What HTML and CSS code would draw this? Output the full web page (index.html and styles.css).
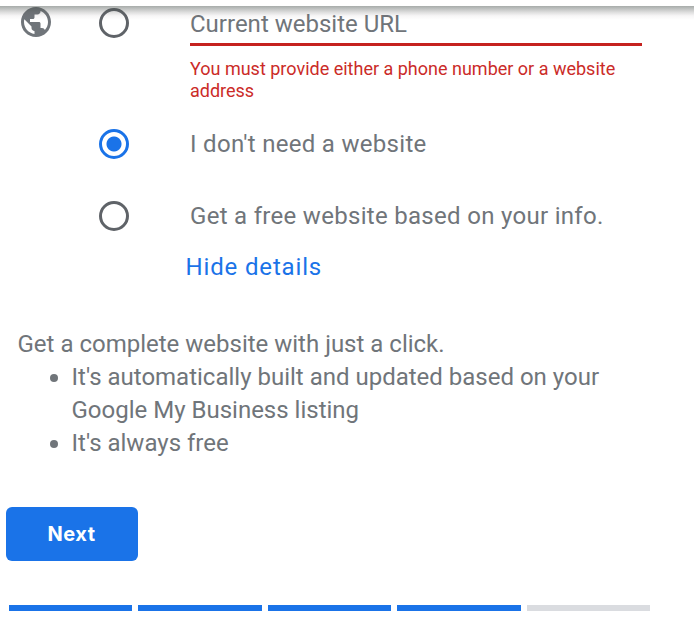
FILE: index.html
```html
<!DOCTYPE html>
<html lang="en">
<head>
  <meta charset="UTF-8">
  <title>Website details</title>
  <link rel="stylesheet" href="styles.css">
</head>
<body>
  <div class="top-bar"></div>
  <form class="form">
    <div class="option option-url">
      <svg class="globe" viewBox="0 0 24 24"><path d="M12 2C6.48 2 2 6.48 2 12s4.48 10 10 10 10-4.48 10-10S17.52 2 12 2zm-1 17.93c-3.95-.49-7-3.85-7-7.93 0-.62.08-1.21.21-1.79L9 15v1c0 1.1.9 2 2 2v1.93zm6.9-2.54c-.26-.81-1-1.39-1.9-1.39h-1v-3c0-.55-.45-1-1-1H8v-2h2c.55 0 1-.45 1-1V7h2c1.1 0 2-.9 2-2v-.41c2.93 1.19 5 4.06 5 7.41 0 2.08-.8 3.97-2.1 5.39z"/></svg>
      <span class="radio"></span>
      <div class="field">
        <div class="field-label">Current website URL</div>
        <p class="error">You must provide either a phone number or a website address</p>
      </div>
    </div>
    <div class="option">
      <span class="radio selected"></span>
      <span class="label">I don't need a website</span>
    </div>
    <div class="option">
      <span class="radio"></span>
      <span class="label">Get a free website based on your info.</span>
    </div>
    <a class="link">Hide details</a>
    <div class="details">
      <p>Get a complete website with just a click.</p>
      <ul>
        <li>It's automatically built and updated based on your <span class="listing">Google My Business listing</span></li>
        <li>It's always free</li>
      </ul>
    </div>
    <button type="button" class="next">Next</button>
    <div class="progress">
      <span class="step done"></span>
      <span class="step done"></span>
      <span class="step done"></span>
      <span class="step done"></span>
      <span class="step"></span>
    </div>
  </form>
</body>
</html>
```
FILE: styles.css
```css
* {
  box-sizing: border-box;
}
body {
  margin: 0;
  background: #fff;
  color: #70757a;
  font-family: Roboto, sans-serif;
  font-size: 24px;
  overflow: hidden;
}
p, ul {
  margin: 0;
}
/* shadow that the header casts over the scrolled form */
.top-bar {
  position: absolute;
  top: 6px;
  left: 0;
  right: 0;
  height: 14px;
  background: linear-gradient(rgba(60, 70, 65, 0.45), rgba(90, 90, 90, 0.2) 45%, rgba(90, 70, 80, 0.05) 70%, rgba(0, 0, 0, 0));
}
.form {
  height: 635px;
}
.option {
  display: grid;
  grid-template-columns: 30px 452px;
  column-gap: 61px;
  align-items: center;
  height: 72px;
  padding-left: 99px;
}
.option-url {
  grid-template-columns: 81.5px 91px 452px;
  column-gap: 0;
  align-items: start;
  height: 108px;
  padding: 4px 0 0 17.5px;
}
.globe {
  width: 36px;
  height: 36px;
  fill: #70757a;
}
.radio {
  width: 30px;
  height: 30px;
  border: 3px solid #5f6368;
  border-radius: 50%;
}
.option-url .radio {
  margin-top: 4px;
}
.selected {
  border-color: #1a73e8;
  background: radial-gradient(circle, #1a73e8 7px, transparent 8px);
}
.field-label {
  height: 42px;
  line-height: 40px;
  border-bottom: 3px solid #c5221f;
}
.error {
  margin-top: 12px;
  color: #cb2b28;
  font-size: 18px;
  line-height: 22px;
}
.label {
  letter-spacing: 0.3px;
}
.link {
  display: block;
  margin-left: 185.5px;
  line-height: 30px;
  color: #1a73e8;
  letter-spacing: 0.85px;
}
.details {
  margin-top: 46px;
  padding-left: 17.5px;
  line-height: 33px;
}
.details ul {
  padding-left: 54px;
  list-style: none;
}
.details li::before {
  content: "";
  float: left;
  width: 8px;
  height: 8px;
  margin: 13px 0 0 -22px;
  border-radius: 50%;
  background: #70757a;
}
.listing {
  display: block;
}
.next {
  display: block;
  width: 132px;
  height: 54px;
  margin: 47px 0 0 6px;
  padding: 0 1px 0 0;
  border: none;
  border-radius: 6px;
  background: #1a73e8;
  color: #fff;
  font-family: Inter, Roboto, sans-serif;
  font-size: 20px;
  font-weight: 700;
  letter-spacing: 0.5px;
}
.progress {
  display: grid;
  grid-template-columns: repeat(5, 1fr);
  gap: 6px;
  width: 641px;
  margin: 44px 0 0 9px;
}
.step {
  height: 6px;
  background: #dadce0;
}
.done {
  background: #1a73e8;
}
```
